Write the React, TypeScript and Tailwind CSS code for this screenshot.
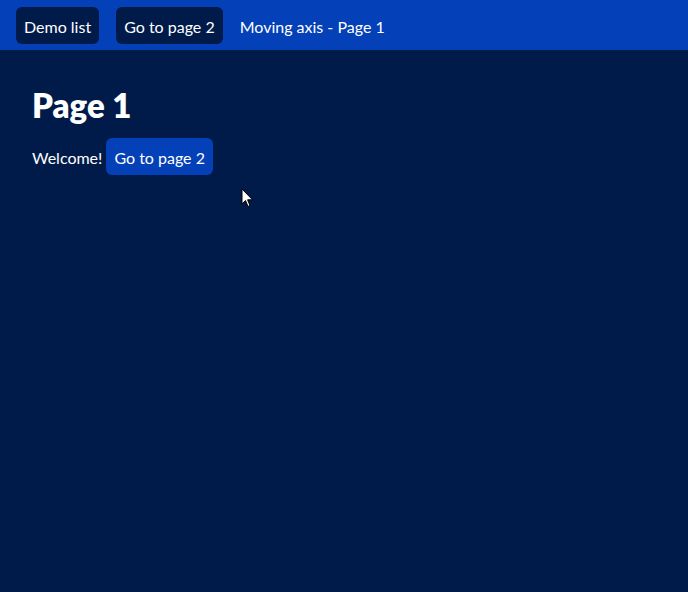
export default function App() {
  return (
    <div
      className="min-h-[592px] w-full bg-[#001a4a] text-white relative"
      style={{ fontFamily: '"Lato", "Noto Sans", sans-serif' }}
    >
      <header className="h-[50px] bg-[#0440b8] flex items-center gap-[17px] px-4">
        <button className="h-[37px] px-2 pt-[2px] mt-[1px] rounded-md bg-[#001a4a] text-white text-base">Demo list</button>
        <button className="h-[37px] px-2 pt-[2px] mt-[1px] rounded-md bg-[#001a4a] text-white text-base">Go to page 2</button>
        <span className="text-base pt-[4px]">Moving axis - Page 1</span>
      </header>

      <main className="px-8 pt-[39px]">
        <h1 className="text-[33px] font-extrabold leading-none">Page 1</h1>
        <div className="mt-[16px] flex items-center gap-1">
          <span className="text-base pt-[2px]">Welcome!</span>
          <button className="h-[37px] px-2 pt-[2px] rounded-md bg-[#0440b8] text-white text-base">Go to page 2</button>
        </div>
      </main>

      {/* mouse cursor */}
      <svg className="absolute left-[241px] top-[188px]" width="13" height="20" viewBox="0 0 13 20">
        <path d="M1 1 L1 16 L4.5 12.5 L7 18.5 L9 17.6 L6.6 11.8 L11.5 11.8 Z" fill="#fff" stroke="#000" strokeWidth="1" />
      </svg>
    </div>
  );
}
